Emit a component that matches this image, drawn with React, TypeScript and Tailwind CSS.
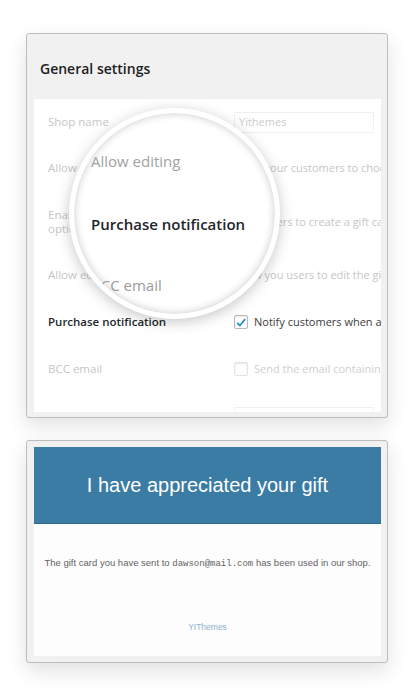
import React from 'react';

const sans = { fontFamily: '"Open Sans", "Noto Sans", sans-serif' };
const arial = { fontFamily: '"Liberation Sans", Arial, sans-serif' };

const Checkbox: React.FC<{ checked?: boolean; faded?: boolean }> = ({ checked, faded }) => (
  <span
    className={`flex h-[14px] w-[14px] shrink-0 items-center justify-center rounded-[2px] border bg-white shadow-[inset_0_1px_2px_rgba(0,0,0,0.1)] ${
      faded ? 'border-[#e4e4e4]' : 'border-[#b4b9be]'
    }`}
  >
    {checked && (
      <svg viewBox="0 0 16 16" className="h-[13px] w-[13px]">
        <path d="M3 8.5 L6.5 12 L13.5 3.5" fill="none" stroke="#1e8cbe" strokeWidth="2.2" />
      </svg>
    )}
  </span>
);

const Row: React.FC<{ h: string; label: React.ReactNode; dark?: boolean; children: React.ReactNode }> = ({
  h,
  label,
  dark,
  children,
}) => (
  <div className={`flex ${h} items-center`}>
    <div
      className={`w-[200px] shrink-0 pl-[14px] leading-[14px] ${
        dark ? 'text-[11.5px] font-semibold text-[#23282d]' : 'text-[11.5px] text-[#c6c6c6]'
      }`}
    >
      {label}
    </div>
    <div className="flex min-w-0 items-center gap-[6px] whitespace-nowrap text-[11px]">{children}</div>
  </div>
);

export default function App() {
  return (
    <div className="min-h-[696px] w-[420px] bg-white pt-[33px]" style={sans}>
      {/* settings card */}
      <div className="relative ml-[26px] h-[385px] w-[362px] rounded-[3px] border border-[#bdbdbd] bg-[#f1f1f1] shadow-[0_8px_20px_rgba(0,0,0,0.12)]">
        <div className="flex h-[65px] items-center pl-[13px] pt-[4px] text-[14px] font-semibold text-[#1e1e1e]">
          General settings
        </div>
        <div className="ml-[7px] h-[313px] w-[347px] overflow-hidden bg-white">
          <Row h="h-[46px]" label="Shop name">
            <span className="flex h-[21px] w-[140px] shrink-0 items-center border border-[#f0f0f0] px-[4px] text-[11px] text-[#cccccc]">
              Yithemes
            </span>
            <span className="text-[#d4d4d4]">Set your shop name</span>
          </Row>
          <Row h="h-[46px]" label="Allow variable amount">
            <span className="text-[#c6c6c6]">Allow your customers to choose</span>
          </Row>
          <Row
            h="h-[62px]"
            label={
              <>
                Enable gift card for
                <br />
                option
              </>
            }
          >
            <span className="text-[#c6c6c6]">Allow users to create a gift card</span>
          </Row>
          <Row h="h-[44px]" label="Allow editing">
            <span className="text-[#c6c6c6]">Allow you users to edit the gift</span>
          </Row>
          <Row h="h-[50px]" label="Purchase notification" dark>
            <Checkbox checked />
            <span className="text-[#3c3c3c]">Notify customers when a gift</span>
          </Row>
          <Row h="h-[44px]" label="BCC email">
            <Checkbox faded />
            <span className="text-[#d0d0d0]">Send the email containing the</span>
          </Row>
          <div className="pl-[200px] pt-[16px]">
            <div className="h-[21px] w-[140px] border border-[#f0f0f0]" />
          </div>
        </div>

        {/* magnifier */}
        <div className="absolute left-[42px] top-[74px] h-[211px] w-[211px] overflow-hidden rounded-full border-[5px] border-white bg-white shadow-[0_3px_14px_rgba(0,0,0,0.22),inset_0_0_8px_rgba(0,0,0,0.12)]">
          <div className="relative h-full w-full rounded-full shadow-[inset_0_0_10px_rgba(0,0,0,0.1)]">
            <div className="absolute left-[17px] top-[37px] whitespace-nowrap text-[15px] leading-[22px] text-[#a2a2a2]">
              Allow editing
            </div>
            <div className="absolute left-[17px] top-[100px] whitespace-nowrap text-[15px] font-semibold leading-[22px] text-[#1f252b]">
              Purchase notification
            </div>
            <div className="absolute left-[17px] top-[161px] whitespace-nowrap text-[15px] leading-[22px] text-[#9a9a9a]">
              BCC email
            </div>
          </div>
        </div>
      </div>

      {/* email card */}
      <div className="ml-[26px] mt-[22px] h-[223px] w-[362px] rounded-[3px] border border-[#bdbdbd] bg-[#f1f1f1] pt-[6px] shadow-[0_8px_20px_rgba(0,0,0,0.12)]" style={arial}>
        <div className="ml-[7px] w-[347px]">
          <div className="flex h-[77px] items-center justify-center border-b border-[#2f6a8f] bg-[#3a7ca3] text-[20px] text-white">
            I have appreciated your gift
          </div>
          <div className="flex h-[132px] flex-col items-center bg-[#fdfdfd] pt-[33px]">
            <p className="text-[9.5px] leading-[12px] text-[#636363]">
              The gift card you have sent to{' '}
              <span className="text-[9px]" style={{ fontFamily: '"Liberation Mono", "Courier New", monospace' }}>
                dawson@mail.com
              </span>{' '}
              has been used in our shop.
            </p>
            <p className="mt-[51px] text-[8.5px] leading-[12px] text-[#8fb1cb]">YIThemes</p>
          </div>
        </div>
      </div>
    </div>
  );
}
